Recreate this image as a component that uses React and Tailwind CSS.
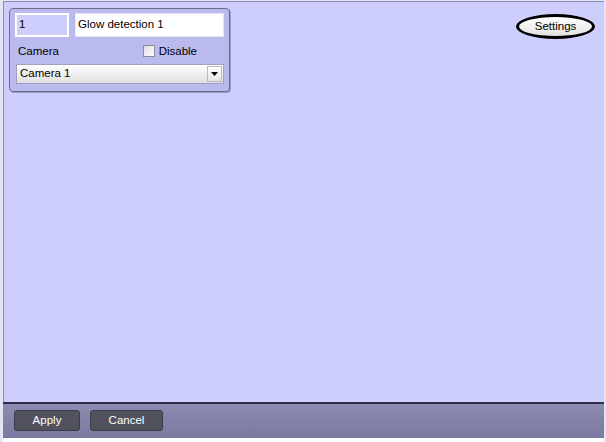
import React from 'react';

const font = { fontFamily: '"Liberation Sans", Arial, sans-serif' };

const App = () => {
  return (
    <div className="w-[606px] h-[442px] bg-[#e4e4f4] flex flex-col pl-[3px] pr-[2px] pt-px overflow-hidden" style={font}>
      {/* Main area */}
      <div className="flex-1 bg-[#cecefc] border-l border-t border-[#8c8cac] flex justify-between items-start pl-[5px] pt-[6px] pr-[9px]">
        {/* Detector panel */}
        <div className="w-[221px] h-[84px] bg-[#babaee] border border-[#6c6c8c] rounded-[4px] shadow-[1px_1px_0_#9a9ac4] px-[5px] pt-[4px]">
          <div className="flex gap-[6px]">
            <div className="w-[54px] h-[24px] bg-[#cecefc] border-2 border-white flex items-center pl-[2px] text-[11.5px] text-black">1</div>
            <div className="flex-1 h-[24px] bg-white border border-[#e6e6f4] flex items-center pl-[2px] text-[11.5px] text-black">Glow detection 1</div>
          </div>
          <div className="flex items-center justify-between mt-[7px] pl-[3px] pr-[27px] text-[11.5px] text-black leading-[14px]">
            <span>Camera</span>
            <label className="flex items-center gap-[4px]">
              <span className="w-[12px] h-[12px] border border-[#8a8a9a] bg-gradient-to-br from-[#dcdce4] to-white" />
              <span>Disable</span>
            </label>
          </div>
          <div className="mt-[6px] ml-px h-[20px] border border-[#a0a0c0] bg-gradient-to-b from-white to-[#e0e0e0] flex items-center">
            <span className="flex-1 pl-[3px] text-[11.5px] text-black">Camera 1</span>
            <span className="w-[15px] h-[16px] mr-px bg-gradient-to-b from-white to-[#e4e4e4] border border-[#b8b8c8] flex items-center justify-center">
              <svg width="7" height="4" viewBox="0 0 7 4"><polygon points="0,0 7,0 3.5,4" fill="#000" /></svg>
            </span>
          </div>
        </div>

        {/* Settings */}
        <button className="mt-[6px] shrink-0 w-[79px] h-[25px] rounded-[50%] border-[3px] border-black bg-gradient-to-b from-white to-[#e2e2e2] text-[11.5px] text-black flex items-center justify-center">
          Settings
        </button>
      </div>

      {/* Bottom bar */}
      <div className="h-[36px] border-t-2 border-[#2e2e4c] bg-gradient-to-b from-[#8c8cb0] to-[#7a7aa2] flex items-center gap-[10px] pl-[11px] pb-px">
        <button className="w-[66px] h-[21px] rounded-[3px] bg-[#52525e] border border-[#3c3c48] text-white text-[11.5px] flex items-center justify-center">Apply</button>
        <button className="w-[73px] h-[21px] rounded-[3px] bg-[#52525e] border border-[#3c3c48] text-white text-[11.5px] flex items-center justify-center">Cancel</button>
      </div>
      <div className="h-[4px] bg-white" />
    </div>
  );
};

export default App;
